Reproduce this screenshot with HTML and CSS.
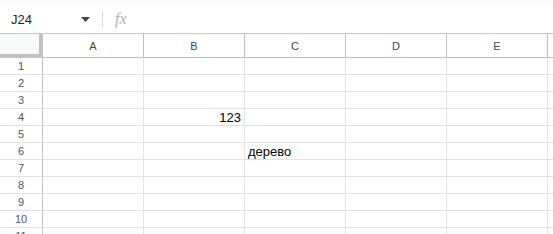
FILE: index.html
```html
<!DOCTYPE html>
<html lang="ru">
<head>
  <meta charset="UTF-8">
  <title>Sheet</title>
  <link rel="stylesheet" href="styles.css">
</head>
<body>
  <div class="topstrip"></div>
  <div class="formula-bar">
    <div class="name-box">
      <span class="cell-ref">J24</span>
      <svg class="caret" width="9" height="5" viewBox="0 0 9 5"><path d="M0 0h9L4.5 5z" fill="#444"/></svg>
    </div>
    <div class="sep"></div>
    <span class="fx">fx</span>
  </div>
  <table class="grid">
    <colgroup>
      <col class="c-head"><col class="c-col"><col class="c-col"><col class="c-col"><col class="c-col"><col class="c-col"><col class="c-edge">
    </colgroup>
    <thead>
      <tr>
        <th class="corner"></th>
        <th>A</th><th>B</th><th>C</th><th>D</th><th>E</th><th class="edge"></th>
      </tr>
    </thead>
    <tbody>
      <tr><th>1</th><td></td><td></td><td></td><td></td><td></td><td></td></tr>
      <tr><th>2</th><td></td><td></td><td></td><td></td><td></td><td></td></tr>
      <tr><th>3</th><td></td><td></td><td></td><td></td><td></td><td></td></tr>
      <tr><th>4</th><td></td><td class="num">123</td><td></td><td></td><td></td><td></td></tr>
      <tr><th>5</th><td></td><td></td><td></td><td></td><td></td><td></td></tr>
      <tr><th>6</th><td></td><td></td><td>дерево</td><td></td><td></td><td></td></tr>
      <tr><th>7</th><td></td><td></td><td></td><td></td><td></td><td></td></tr>
      <tr><th>8</th><td></td><td></td><td></td><td></td><td></td><td></td></tr>
      <tr><th>9</th><td></td><td></td><td></td><td></td><td></td><td></td></tr>
      <tr><th>10</th><td></td><td></td><td></td><td></td><td></td><td></td></tr>
      <tr><th>11</th><td></td><td></td><td></td><td></td><td></td><td></td></tr>
    </tbody>
  </table>
</body>
</html>
```

FILE: styles.css
```css
* { box-sizing: border-box; }
body { margin: 0; background: #fff; font-family: "Liberation Sans", Arial, sans-serif; overflow: hidden; }

.topstrip { height: 5px; background: #f9fbfd; }
.formula-bar { height: 29px; display: flex; align-items: center; border-bottom: 1px solid #c4c7c5; background: #fff; }
.name-box { width: 102px; display: flex; align-items: center; justify-content: space-between; padding: 0 12px 0 11px; }
.cell-ref { font-size: 13px; color: #1f1f1f; }
.caret { margin-top: 1px; }
.sep { width: 1px; height: 17px; background: #d9d9d9; }
.fx { margin-left: 12px; font-family: "Liberation Serif", "Times New Roman", serif; font-style: italic; font-size: 16px; color: #b0b0b0; }

.grid { border-collapse: separate; border-spacing: 0; table-layout: fixed; width: 568px; min-width: 568px; }
.c-head { width: 43px; }
.c-col { width: 101px; }
.c-edge { width: 20px; }
.grid th, .grid td { padding: 0; border-right: 1px solid #e2e2e2; border-bottom: 1px solid #e2e2e2; font-size: 13px; white-space: nowrap; overflow: visible; }
.grid thead th { height: 24px; font-weight: normal; font-size: 11px; color: #444; border-right-color: #c0c0c0; border-bottom-color: #c0c0c0; background: #fff; }
.grid thead th.corner { background: #f8f9fa; border-right: 4px solid #c0c0c0; border-bottom: 4px solid #c0c0c0; }
.grid tbody th { height: 17px; font-weight: normal; font-size: 11px; color: #555; border-right-color: #c0c0c0; border-bottom-color: #e2e2e2; }
.grid td { height: 17px; color: #000; padding: 0 3px; vertical-align: bottom; line-height: 15px; }
.grid td.num { text-align: right; }
```
